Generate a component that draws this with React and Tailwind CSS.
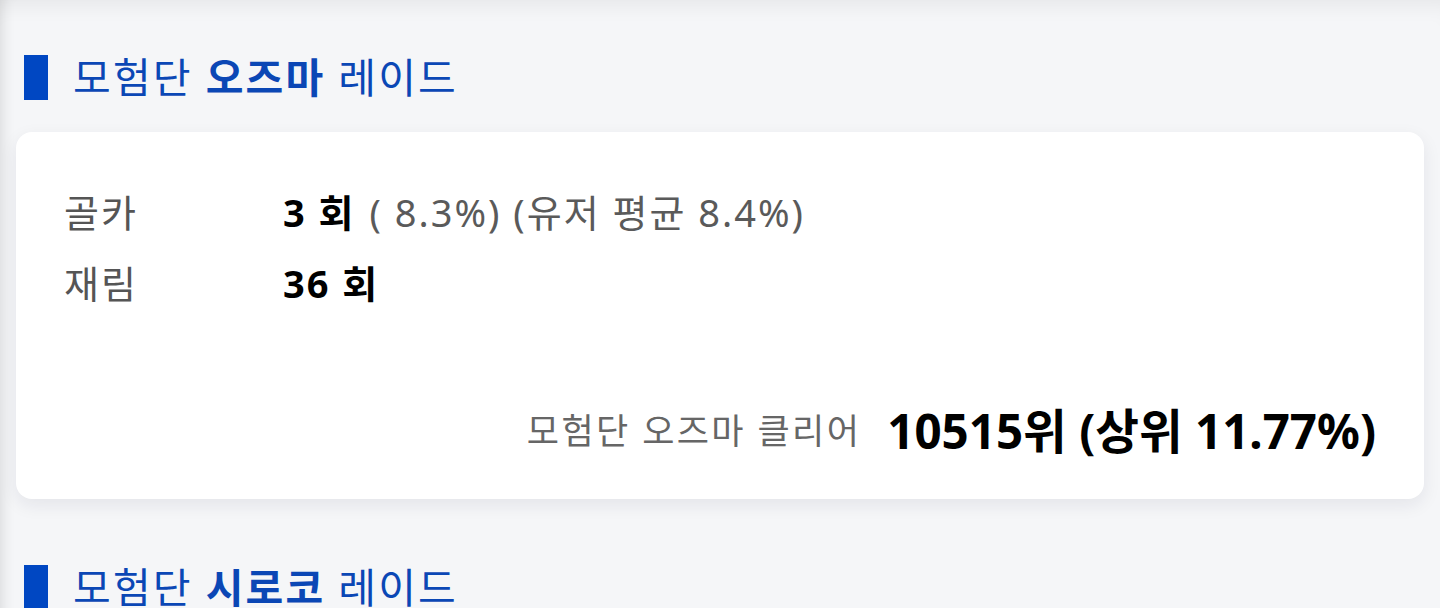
export default function App() {
  const font = { fontFamily: '"Noto Sans", "Noto Sans CJK KR", sans-serif' };
  return (
    <div
      className="min-h-[608px] w-full bg-[#f5f6f8] px-4 pt-[47px] shadow-[inset_14px_0_14px_-12px_rgba(0,0,0,0.12),inset_0_22px_22px_-18px_rgba(0,0,0,0.07)]"
      style={font}
    >
      <Heading bold="오즈마" />
      <div className="mt-[25px] rounded-2xl bg-white pl-12 pr-12 pt-[45px] pb-[38px] shadow-[0_6px_18px_rgba(20,30,60,0.08)]">
        <div className="flex h-[71px] items-center text-[38px] tracking-[2px]">
          <span className="w-[219px] text-[#555]">골카</span>
          <span className="font-bold text-black">3 회</span>
          <span className="ml-[14px] text-[#5a5a5a]">( 8.3%) (유저 평균 8.4%)</span>
        </div>
        <div className="flex h-[71px] items-center text-[38px] tracking-[2px]">
          <span className="w-[219px] text-[#555]">재림</span>
          <span className="font-bold text-black">36 회</span>
        </div>
        <div className="mt-[82px] flex h-[60px] items-center justify-end">
          <span className="text-[35px] tracking-[2.4px] text-[#666]">모험단 오즈마 클리어</span>
          <span className="ml-[26px] text-[47.5px] font-bold text-black">10515위 (상위 11.77%)</span>
        </div>
      </div>
      <div className="mt-[58px]">
        <Heading bold="시로코" />
      </div>
    </div>
  );
}

function Heading({ bold }) {
  return (
    <div className="flex h-[60px] items-center pl-2">
      <div className="h-[45px] w-6 bg-[#0047c2]" />
      <div className="ml-[25px] text-[41px] leading-none tracking-[2.2px] text-[#0b47b5]">
        모험단 <span className="font-bold">{bold}</span> 레이드
      </div>
    </div>
  );
}
